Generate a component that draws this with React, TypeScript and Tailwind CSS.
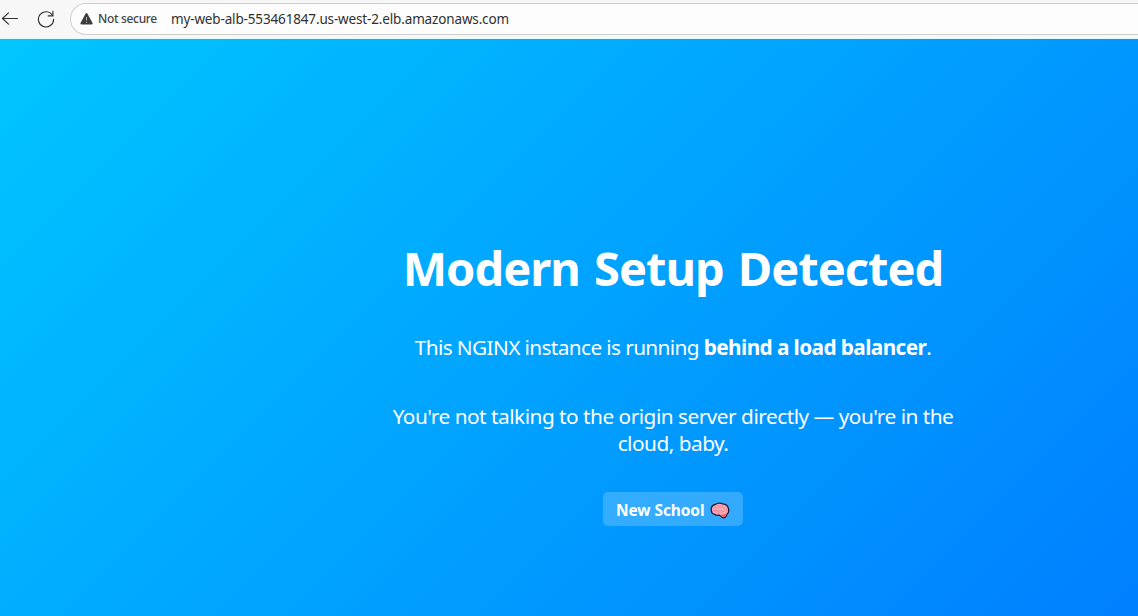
function BackIcon() {
  return (
    <svg width="17" height="16" viewBox="0 0 17 16" fill="none" stroke="#303030" strokeWidth="1.1" strokeLinecap="round" strokeLinejoin="round">
      <path d="M16.500 7.500H1.500M7.500 1.800 1.500 7.500l6 5.700" />
    </svg>
  );
}

function ReloadIcon() {
  return (
    <svg width="18" height="18" viewBox="0 0 18 18" fill="none" stroke="#303030" strokeWidth="1.15" strokeLinecap="round" strokeLinejoin="round">
      <path d="M15.600 5.600A7.600 7.600 0 1 0 16.600 9.300" />
      <path d="M15.900 1.400V5.900H11.200" />
    </svg>
  );
}

function WarningIcon() {
  return (
    <svg width="13" height="12" viewBox="0 0 13 12">
      <path d="M5.500.8Q6.500-.6 7.500.8L12.500 9.900Q13 11.500 11.500 11.500H1.500Q0 11.500.5 9.900Z" fill="#3d3d3d" />
      <path d="M6.500 4v3.500" stroke="#b0b0b0" strokeWidth="1" />
      <circle cx="6.500" cy="9.200" r=".6" fill="#b0b0b0" />
    </svg>
  );
}

function BrainIcon() {
  return (
    <svg width="20" height="18" viewBox="0 0 20 18">
      <path
        d="M1.300 8.500C.8 5.500 2.600 3.200 5.200 2.500 7.500.8 10.500.8 12.800 1.800 16 2.100 18.300 4.600 18.600 7.500 19 9.500 18.300 11.300 17 12.200 16.600 14.500 14.800 16.300 12.900 15.700 11.300 15.300 10.500 14 9.600 13.200 7.500 13.700 5.500 13.300 4.500 12.300 2.500 11.800 1.300 10.300 1.300 8.500Z"
        fill="#f8a5b1"
        stroke="#251a38"
        strokeWidth="1.3"
      />
      <path d="M10.300 12.900C12.500 12.900 14.800 12.300 16.700 11.500 16.400 14 14.800 15.500 13 15.100 11.700 14.800 11 13.700 10.300 12.900Z" fill="#e85f70" />
      <path
        d="M4 5.500q2-.8 3 .5M8 3.500q.5 2 2.500 1.800M12.500 3.500q-.5 2.500 1.800 3M3.500 9q2-1.500 3.500 0t3-.5M11 8.500q1.500 2.500 3.500.8M16.500 6.500q-1 1.200.2 2.500M7 11.300q1.500.5 2.500-.5"
        fill="none"
        stroke="#e98797"
        strokeWidth=".9"
        strokeLinecap="round"
      />
    </svg>
  );
}

function Toolbar() {
  return (
    <header className="flex h-[39px] w-full items-start border-b border-[#e4fbfb] bg-[#f7f7f7]">
      <div className="ml-[1px] mt-[11px]">
        <BackIcon />
      </div>
      <div className="ml-[19px] mt-[10px]">
        <ReloadIcon />
      </div>
      <div className="ml-[15px] mt-[3px] flex h-8 flex-1 items-center rounded-l-full border border-r-0 border-[#cdd0ca] bg-[#fdfdfd] pl-[9px] font-['Noto_Sans',sans-serif] whitespace-nowrap">
        <WarningIcon />
        <span className="ml-[5px] w-[73px] text-[12px] font-medium tracking-[-0.33px] text-[#444]">Not secure</span>
        <span className="text-[13.5px] tracking-[-0.15px] text-[#303030]">my-web-alb-553461847.us-west-2.elb.amazonaws.com</span>
      </div>
    </header>
  );
}

export default function App() {
  return (
    <div className="h-[616px] w-full overflow-hidden">
      <Toolbar />
      <main className="flex h-[688px] w-[1346px] flex-col items-center bg-[linear-gradient(135deg,#00c6ff,#0072ff)] pt-[197px] text-center font-['Noto_Sans',sans-serif] text-white">
        <h1 className="text-[47px] leading-[64px] font-bold tracking-[-1px] [word-spacing:3px] whitespace-nowrap">Modern Setup Detected</h1>
        <p className="mt-[34px] text-[20.8px] leading-[27px] tracking-[-0.62px] whitespace-nowrap">
          This NGINX instance is running <strong className="tracking-[-0.6px]">behind a load balancer</strong>.
        </p>
        <p className="mt-[42px] text-[20.8px] leading-[27px] tracking-[-0.5px] whitespace-nowrap">
          You&apos;re not talking to the origin server directly — you&apos;re in the
          <br />
          cloud, baby.
        </p>
        <div className="mt-[35px] flex h-[34px] w-[140px] items-center rounded-[5px] bg-white/20 pt-[3px] pl-[13px] text-[15.500px] font-bold tracking-[-0.1px] whitespace-nowrap">
          <span className="w-[94px] text-left">New School</span>
          <BrainIcon />
        </div>
      </main>
    </div>
  );
}
